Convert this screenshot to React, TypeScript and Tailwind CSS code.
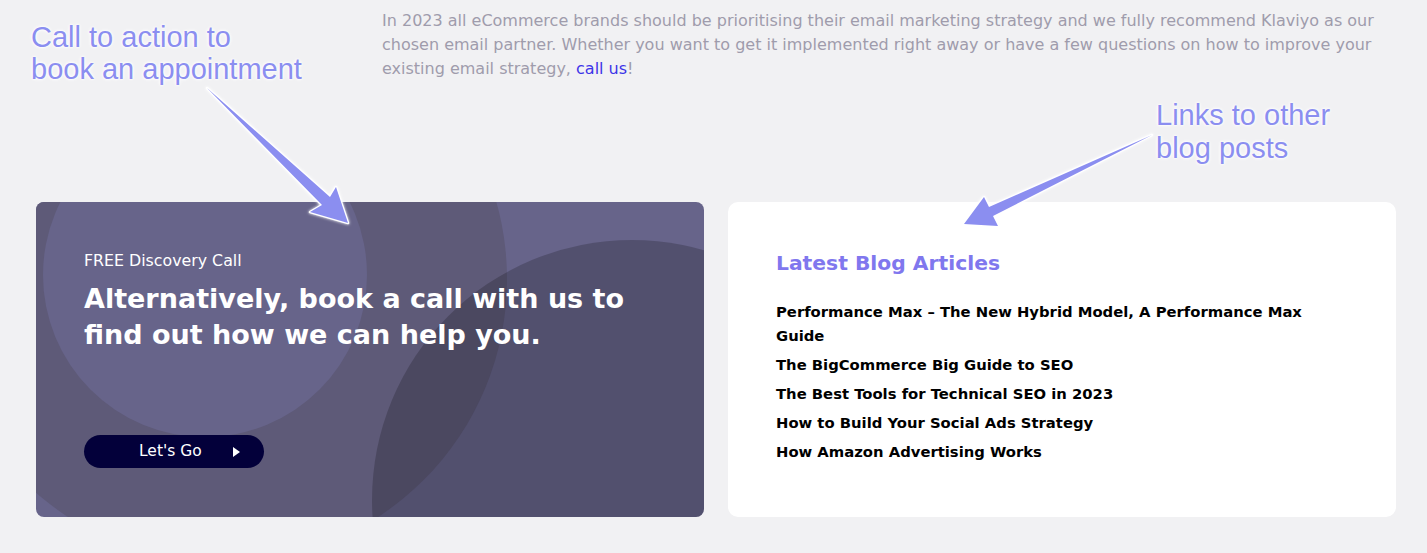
import React from 'react';

const posts = [
  'Performance Max – The New Hybrid Model, A Performance Max Guide',
  'The BigCommerce Big Guide to SEO',
  'The Best Tools for Technical SEO in 2023',
  'How to Build Your Social Ads Strategy',
  'How Amazon Advertising Works',
];

const font = "font-['DejaVu_Sans','Noto_Sans',sans-serif]";
const note =
  "absolute font-['Liberation_Sans',Arial,sans-serif] text-[29px] leading-[32px] text-[#8b8ef0] [text-shadow:0_0_2px_#fff,0_0_3px_#fff,0_0_4px_#fff]";

const Arrows = () => (
  <svg className="pointer-events-none absolute inset-0" width="1427" height="553">
    <defs>
      <filter id="glow" x="-20%" y="-20%" width="140%" height="140%">
        <feDropShadow dx="0" dy="0" stdDeviation="1.5" floodColor="#ffffff" />
      </filter>
    </defs>
    {/* call to action arrow */}
    <polygon
      points="207,88 330,197 336,187 348,223 310,212 322,205"
      fill="#8b8ef0"
      stroke="#ffffff"
      strokeWidth="2.5"
      strokeLinejoin="round"
      paintOrder="stroke"
      filter="url(#glow)"
    />
    {/* blog posts arrow */}
    <polygon
      points="1152,135 989,207 984,197 964,224 998,226 993,216"
      fill="#8b8ef0"
      stroke="#ffffff"
      strokeWidth="2.5"
      strokeLinejoin="round"
      paintOrder="stroke"
      filter="url(#glow)"
    />
  </svg>
);

export default function App() {
  return (
    <div className={`relative min-h-[553px] w-full overflow-hidden bg-[#f1f1f3] ${font}`}>
      <div className="box-content w-[1000px] pl-[382px] pt-[9px]">
        <p className="text-[16px] leading-[24px] text-[#9f9cac]">
          In 2023 all eCommerce brands should be prioritising their email marketing strategy and we fully recommend
          Klaviyo as our chosen email partner. Whether you want to get it implemented right away or have a few
          questions on how to improve your existing email strategy, <a className="text-[#3d35e8]">call us</a>!
        </p>
      </div>

      <div className="ml-[36px] mt-[121px] grid w-[1360px] grid-cols-2 gap-6">
        {/* discovery call card */}
        <div className="relative h-[315px] overflow-hidden rounded-lg bg-[#67648a]">
          <div className="absolute left-[-97px] top-[-207px] h-[568px] w-[568px] rounded-full bg-[#5e5a78]" />
          <div className="absolute left-[7px] top-[-89px] h-[324px] w-[324px] rounded-full bg-[#67648a]" />
          <div className="absolute left-[336px] top-[38px] h-[520px] w-[520px] rounded-full bg-black/20" />
          <div className="relative pl-12 pt-[50px] text-white">
            <div className="text-[15.8px] leading-[18px]">FREE Discovery Call</div>
            <h2 className="mt-[11px] max-w-[570px] text-[27px] font-bold leading-[36px]">
              Alternatively, book a call with us to find out how we can help you.
            </h2>
            <button className="mt-[82px] flex h-[33px] w-[180px] items-center rounded-full bg-[#03003a] pl-[55px] text-[15.5px]">
              <span>Let's Go</span>
              <svg className="ml-[31px]" width="7" height="10" viewBox="0 0 7 10">
                <path d="M0 0 L7 5 L0 10 Z" fill="#fff" />
              </svg>
            </button>
          </div>
        </div>

        {/* latest blog articles */}
        <div className="h-[315px] rounded-[10px] bg-white px-12 pt-[47px]">
          <h3 className="text-[20.3px] font-bold leading-[28px] text-[#8077ee]">Latest Blog Articles</h3>
          <ul className="mt-[23px] flex flex-col gap-[5px]">
            {posts.map((p) => (
              <li key={p} className="max-w-[540px] text-[14.8px] font-bold leading-[24px] text-black">
                {p}
              </li>
            ))}
          </ul>
        </div>
      </div>

      <div className={`${note} left-[31px] top-[21px]`}>
        Call to action to
        <br />
        book an appointment
      </div>
      <div className={`${note} left-[1156px] top-[99px] leading-[33px]`}>
        Links to other
        <br />
        blog posts
      </div>

      <Arrows />
    </div>
  );
}
